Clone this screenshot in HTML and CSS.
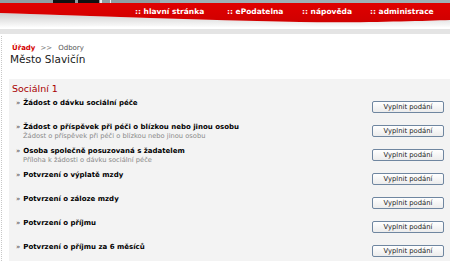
FILE: index.html
```html
<!DOCTYPE html>
<html lang="cs">
<head>
<meta charset="utf-8">
<link rel="stylesheet" href="styles.css">
</head>
<body>
<header class="top">
  <svg class="top-bg" width="450" height="36" viewBox="0 0 450 36" aria-hidden="true">
    <defs>
      <linearGradient id="sw" x1="0" y1="0" x2="0" y2="1">
        <stop offset="0" stop-color="#cfcfcf"/>
        <stop offset="1" stop-color="#ffffff"/>
      </linearGradient>
      <linearGradient id="rd" x1="0" y1="0" x2="0" y2="1">
        <stop offset="0" stop-color="#e00000"/>
        <stop offset="1" stop-color="#d00000"/>
      </linearGradient>
    </defs>
    <rect x="0" y="0" width="450" height="4" fill="#8f9ea3"/>
    <rect x="53" y="0" width="22" height="4" fill="#111"/>
    <rect x="78" y="0" width="21" height="4" fill="#111"/>
    <rect x="100" y="0" width="2" height="4" fill="#e8eef0"/>
    <rect x="110" y="0" width="1" height="4" fill="#e8eef0"/>
    <rect x="160" y="0" width="290" height="4" fill="#9fb0b6"/>
    <path d="M0 13 C100 16 200 20 300 22 C360 23 420 21 450 20 V27 C380 28 300 28 200 27 C120 26 60 27 0 28 Z" fill="url(#sw)"/>
    <path d="M0 3 H450 V20 C420 21 360 23 300 22 C200 20 100 16 0 13 Z" fill="url(#rd)"/>
    <rect x="0" y="29" width="450" height="5" fill="#e4e4e4"/>
  </svg>
  <nav class="nav">
    <a class="nav-item nav-home" href="#">:: hlavní stránka</a>
    <a class="nav-item nav-epod" href="#">:: ePodatelna</a>
    <a class="nav-item nav-help" href="#">:: nápověda</a>
    <a class="nav-item" href="#">:: administrace</a>
  </nav>
</header>
<main class="main">
  <div class="crumbs"><a class="crumb-link" href="#">Úřady</a><span class="crumb-sep">&gt;&gt;</span><span class="crumb-cur">Odbory</span></div>
  <h1 class="title">Město Slavičín</h1>
  <section class="panel">
    <h2 class="panel-title">Sociální 1</h2>
    <ul class="list">
      <li class="row">
        <div class="row-text"><span class="row-name"><span class="bullet">»</span>Žádost o dávku sociální péče</span></div>
        <button class="btn">Vyplnit podání</button>
      </li>
      <li class="row">
        <div class="row-text"><span class="row-name"><span class="bullet">»</span>Žádost o příspěvek při péči o blízkou nebo jinou osobu</span><span class="row-desc">Žádost o příspěvek při péči o blízkou nebo jinou osobu</span></div>
        <button class="btn">Vyplnit podání</button>
      </li>
      <li class="row">
        <div class="row-text"><span class="row-name"><span class="bullet">»</span>Osoba společně posuzovaná s žadatelem</span><span class="row-desc">Příloha k žádosti o dávku sociální péče</span></div>
        <button class="btn">Vyplnit podání</button>
      </li>
      <li class="row">
        <div class="row-text"><span class="row-name"><span class="bullet">»</span>Potvrzení o výplatě mzdy</span></div>
        <button class="btn">Vyplnit podání</button>
      </li>
      <li class="row">
        <div class="row-text"><span class="row-name"><span class="bullet">»</span>Potvrzení o záloze mzdy</span></div>
        <button class="btn">Vyplnit podání</button>
      </li>
      <li class="row">
        <div class="row-text"><span class="row-name"><span class="bullet">»</span>Potvrzení o příjmu</span></div>
        <button class="btn">Vyplnit podání</button>
      </li>
      <li class="row">
        <div class="row-text"><span class="row-name"><span class="bullet">»</span>Potvrzení o příjmu za 6 měsíců</span></div>
        <button class="btn">Vyplnit podání</button>
      </li>
    </ul>
  </section>
</main>
</body>
</html>
```
FILE: styles.css
```css
* { box-sizing: border-box; }
html, body { margin: 0; padding: 0; background: #fff; }
body { font-family: "DejaVu Sans", Verdana, sans-serif; color: #000; width: 450px; overflow: hidden; }

.top { position: relative; height: 36px; }
.top-bg { position: absolute; left: 0; top: 0; display: block; }
.nav { position: relative; display: flex; padding: 6px 0 0 135px; }
.nav-item { color: #fff; font-weight: bold; font-size: 7.5px; line-height: 11px; text-decoration: none; white-space: nowrap; }
.nav-home { width: 92px; }
.nav-epod { width: 75px; }
.nav-help { width: 68px; }

.main { border-left: 1px dotted #c8c8c8; margin-left: 1px; padding: 7px 0 0 7px; min-height: 225px; }
.crumbs { font-size: 7px; line-height: 10px; padding-left: 3px; color: #666; }
.crumb-link { color: #d40000; font-weight: bold; text-decoration: none; }
.crumb-sep { margin: 0 6px 0 5px; color: #777; }
.crumb-cur { color: #555; }
.title { font-size: 10.5px; font-weight: normal; line-height: 13px; margin: 0 0 0 1px; color: #1a1a1a; }

.panel { background: #f3f3f3; margin-top: 13px; padding: 3px 0 0 3px; }
.panel-title { color: #a80000; font-size: 9.5px; font-weight: normal; line-height: 13px; margin: 0 0 2px; }
.list { list-style: none; margin: 0; padding: 0; }
.row { display: grid; grid-template-columns: 1fr auto; align-items: start; height: 24px; padding-right: 6px; }
.row-text { display: flex; flex-direction: column; padding-left: 4px; }
.row-name { font-weight: bold; font-size: 7px; line-height: 9px; padding-top: 2px; white-space: nowrap; }
.bullet { font-weight: normal; color: #444; margin-right: 3px; }
.row-desc { font-size: 6.7px; line-height: 8px; color: #8a8a8a; padding-left: 7px; white-space: nowrap; }
.btn { width: 72px; height: 12px; margin-top: 4px; padding: 0; border: 1px solid #6f86a0; border-radius: 2px; background: linear-gradient(#ffffff, #ececec); font-family: "DejaVu Sans", Tahoma, sans-serif; font-size: 6.8px; line-height: 10px; color: #222; }
```
